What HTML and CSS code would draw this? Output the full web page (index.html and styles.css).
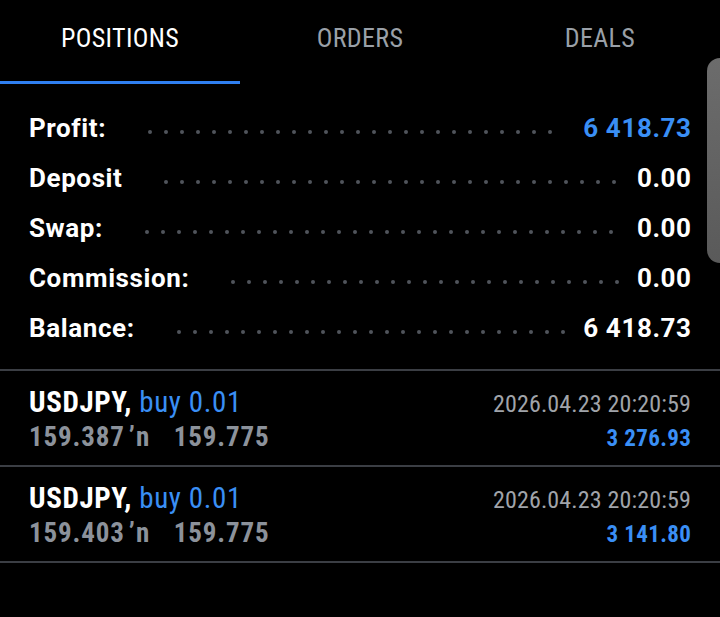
FILE: index.html
```html
<!DOCTYPE html>
<html>
<head>
<meta charset="utf-8">
<link rel="stylesheet" href="styles.css">
</head>
<body>
<div class="screen">
  <nav class="tabs">
    <div class="tab active">POSITIONS</div>
    <div class="tab">ORDERS</div>
    <div class="tab">DEALS</div>
  </nav>

  <section class="summary">
    <div class="srow"><span class="slabel">Profit:</span><span class="leader"><i></i><i></i><i></i><i></i><i></i><i></i><i></i><i></i><i></i><i></i><i></i><i></i><i></i><i></i><i></i><i></i><i></i><i></i><i></i><i></i><i></i><i></i><i></i><i></i><i></i><i></i><i></i><i></i><i></i><i></i><i></i><i></i></span><span class="svalue blue">6 418.73</span></div>
    <div class="srow"><span class="slabel">Deposit</span><span class="leader"><i></i><i></i><i></i><i></i><i></i><i></i><i></i><i></i><i></i><i></i><i></i><i></i><i></i><i></i><i></i><i></i><i></i><i></i><i></i><i></i><i></i><i></i><i></i><i></i><i></i><i></i><i></i><i></i><i></i><i></i><i></i><i></i></span><span class="svalue">0.00</span></div>
    <div class="srow"><span class="slabel">Swap:</span><span class="leader"><i></i><i></i><i></i><i></i><i></i><i></i><i></i><i></i><i></i><i></i><i></i><i></i><i></i><i></i><i></i><i></i><i></i><i></i><i></i><i></i><i></i><i></i><i></i><i></i><i></i><i></i><i></i><i></i><i></i><i></i><i></i><i></i></span><span class="svalue">0.00</span></div>
    <div class="srow"><span class="slabel">Commission:</span><span class="leader"><i></i><i></i><i></i><i></i><i></i><i></i><i></i><i></i><i></i><i></i><i></i><i></i><i></i><i></i><i></i><i></i><i></i><i></i><i></i><i></i><i></i><i></i><i></i><i></i><i></i><i></i><i></i><i></i><i></i><i></i><i></i><i></i></span><span class="svalue">0.00</span></div>
    <div class="srow"><span class="slabel">Balance:</span><span class="leader"><i></i><i></i><i></i><i></i><i></i><i></i><i></i><i></i><i></i><i></i><i></i><i></i><i></i><i></i><i></i><i></i><i></i><i></i><i></i><i></i><i></i><i></i><i></i><i></i><i></i><i></i><i></i><i></i><i></i><i></i><i></i><i></i></span><span class="svalue">6 418.73</span></div>
  </section>

  <section class="positions">
    <div class="pos">
      <div class="pline">
        <span class="sym">USDJPY, <span class="side">buy 0.01</span></span>
        <span class="time">2026.04.23 20:20:59</span>
      </div>
      <div class="pline">
        <span class="prices">159.387<span class="arrow">ʼn</span>159.775</span>
        <span class="pprofit">3 276.93</span>
      </div>
    </div>
    <div class="pos">
      <div class="pline">
        <span class="sym">USDJPY, <span class="side">buy 0.01</span></span>
        <span class="time">2026.04.23 20:20:59</span>
      </div>
      <div class="pline">
        <span class="prices">159.403<span class="arrow">ʼn</span>159.775</span>
        <span class="pprofit">3 141.80</span>
      </div>
    </div>
  </section>

  <div class="scroll-handle"></div>
</div>
</body>
</html>
```

FILE: styles.css
```css
html, body {
  margin: 0;
  padding: 0;
  background: #000;
}
body {
  font-family: Roboto, "Noto Sans", sans-serif;
  color: #fff;
}
.screen {
  position: relative;
  width: 720px;
  height: 617px;
  overflow: hidden;
  background: #000;
}

/* Tabs */
.tabs {
  display: grid;
  grid-template-columns: repeat(3, 1fr);
}
.tab {
  text-align: center;
  font-size: 26px;
  font-stretch: 86%;
  letter-spacing: 0.35px;
  line-height: 30px;
  padding: 23px 0 28px;
  border-bottom: 3px solid transparent;
  color: #9aa0a8;
}
.tab.active {
  color: #fff;
  border-bottom-color: #2f7ff0;
}

/* Summary */
.summary {
  padding: 19px 29px 16px;
  border-bottom: 2px solid #3b3e44;
}
.srow {
  display: flex;
  align-items: center;
  height: 50px;
  line-height: 50px;
  font-size: 26px;
  font-weight: 700;
  letter-spacing: 0.6px;
}
.leader {
  flex: 1;
  display: flex;
  flex-wrap: wrap;
  column-gap: 12px;
  height: 4px;
  overflow: hidden;
  margin: 7px 17px 0 42px;
}
.leader i {
  width: 4px;
  height: 4px;
  border-radius: 50%;
  background: #50545b;
}
.svalue {
  margin-right: -0.6px;
}
.svalue.blue { color: #3a8ff5; }

/* Positions */
.pos {
  padding: 14px 29px 11px;
  border-bottom: 2px solid #3b3e44;
}
.pline {
  display: flex;
  justify-content: space-between;
  align-items: baseline;
  font-stretch: 85%;
}
.sym {
  font-size: 29px;
  line-height: 35px;
  font-weight: 700;
  letter-spacing: 0.6px;
}
.side {
  font-weight: 400;
  color: #3a8ff5;
}
.time {
  font-size: 24px;
  letter-spacing: 0.15px;
  color: #a0a4aa;
}
.prices {
  font-size: 27px;
  line-height: 34px;
  font-weight: 700;
  letter-spacing: 0.85px;
  color: #8c929b;
}
.arrow {
  margin: 0 23px 0 4px;
  letter-spacing: 1.5px;
}
.pprofit {
  font-size: 23px;
  font-weight: 700;
  letter-spacing: 0.4px;
  margin-right: -0.4px;
  color: #3a8ff5;
}

.scroll-handle {
  position: absolute;
  right: 0;
  top: 58px;
  width: 13px;
  height: 205px;
  border-radius: 13px 0 0 13px;
  background: linear-gradient(#6c6c6c, #5a5a5a);
}
```
